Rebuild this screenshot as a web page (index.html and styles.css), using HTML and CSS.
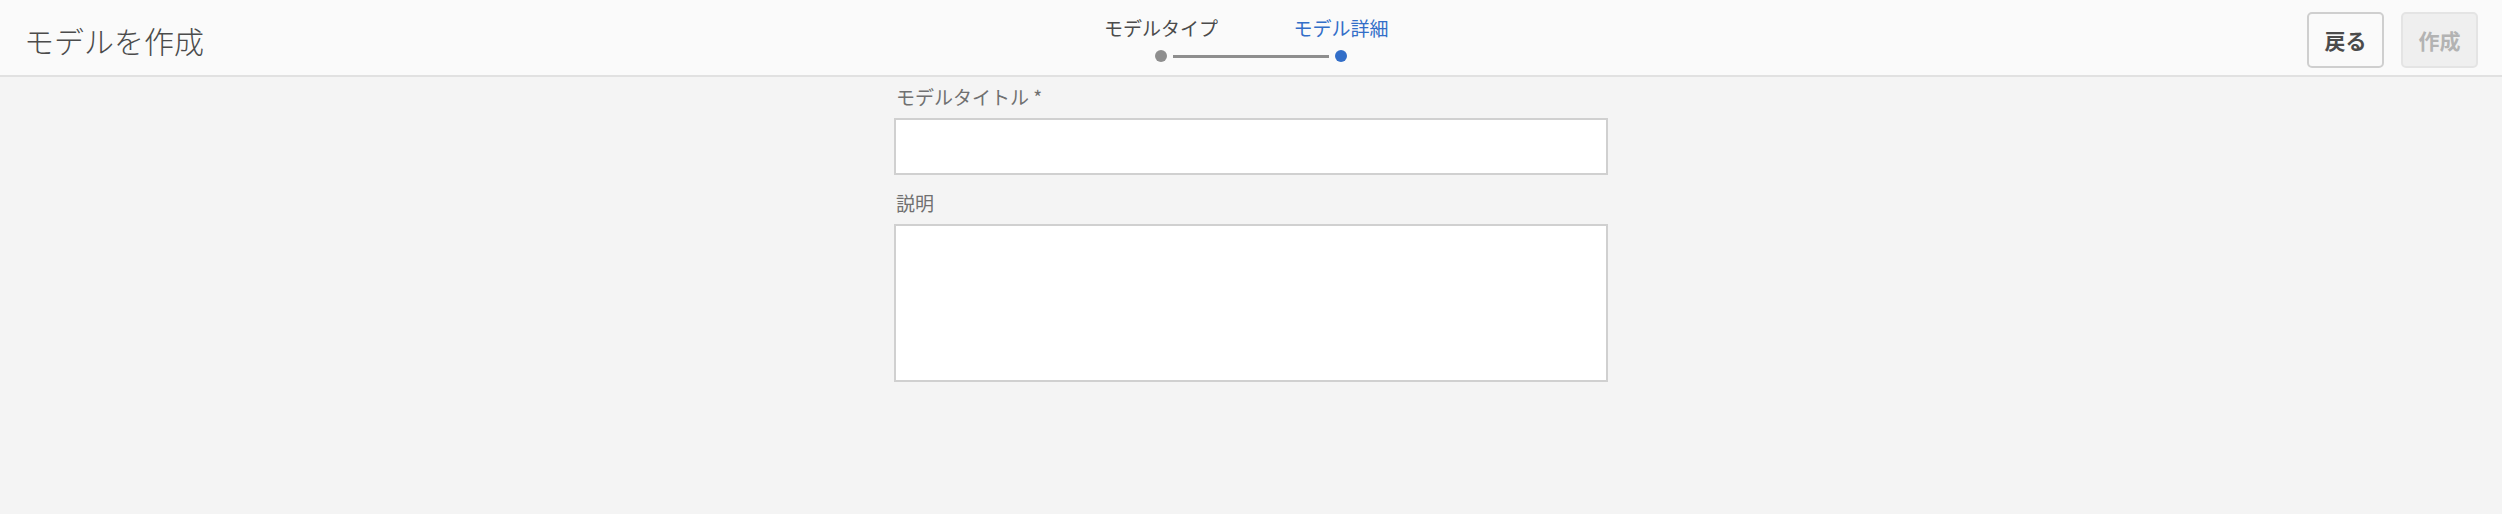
FILE: index.html
```html
<!DOCTYPE html>
<html lang="ja">
<head>
<meta charset="utf-8">
<title>モデルを作成</title>
<link rel="stylesheet" href="styles.css">
</head>
<body>
<header class="topbar">
  <h1 class="title">モデルを作成</h1>
  <div class="steps">
    <div class="step-labels">
      <span class="step-label done">モデルタイプ</span>
      <span class="step-label current">モデル詳細</span>
    </div>
    <div class="step-track">
      <span class="dot dot-done"></span>
      <span class="track-line"></span>
      <span class="dot dot-current"></span>
    </div>
  </div>
  <div class="actions">
    <button class="btn">戻る</button>
    <button class="btn btn-disabled" disabled>作成</button>
  </div>
</header>
<main class="content">
  <form class="form">
    <div class="field">
      <label class="label">モデルタイトル *</label>
      <input class="input" type="text">
    </div>
    <div class="field">
      <label class="label">説明</label>
      <textarea class="textarea"></textarea>
    </div>
  </form>
</main>
</body>
</html>
```
FILE: styles.css
```css
html, body {
  margin: 0;
  padding: 0;
  background: #f4f4f4;
  font-family: "Noto Sans CJK JP", "Noto Sans", sans-serif;
}

.topbar {
  display: grid;
  grid-template-columns: 1fr auto 1fr;
  height: 75px;
  background: #fafafa;
  border-bottom: 2px solid #e1e1e1;
}

.title {
  margin: 0;
  padding-left: 24px;
  align-self: center;
  margin-top: 4px;
  font-size: 30px;
  font-weight: 200;
  color: #4b4b4b;
  line-height: 1;
}

.steps {
  padding-top: 16px;
  display: flex;
  flex-direction: column;
  align-items: center;
}

.step-labels {
  display: flex;
}

.step-label {
  width: 180px;
  text-align: center;
  font-size: 19px;
  line-height: 24px;
}

.step-label.done { color: #4b4b4b; }
.step-label.current { color: #326ec8; }

.step-track {
  display: flex;
  align-items: center;
  gap: 6px;
  margin-top: 10px;
}

.dot {
  width: 12px;
  height: 12px;
  border-radius: 50%;
}

.dot-done { background: #8e8e8e; }
.dot-current { background: #326ec8; }

.track-line {
  width: 156px;
  height: 3px;
  background: #8e8e8e;
}

.actions {
  display: flex;
  justify-content: flex-end;
  align-items: center;
  gap: 17px;
  padding-right: 24px;
  margin-top: 4px;
}

.btn {
  width: 77px;
  height: 56px;
  border: 2px solid #cfcfcf;
  border-radius: 5px;
  background: #fafafa;
  color: #4b4b4b;
  font-family: "Noto Sans CJK JP", "Noto Sans", sans-serif;
  font-size: 21px;
  font-weight: 700;
  padding: 0;
}

.btn-disabled {
  background: #efefef;
  border-color: #e4e4e4;
  color: #b3b3b3;
}

.content {
  display: flex;
  justify-content: center;
  padding-top: 5px;
}

.form {
  width: 714px;
  display: flex;
  flex-direction: column;
  gap: 13px;
}

.field {
  display: flex;
  flex-direction: column;
}

.label {
  font-size: 19px;
  line-height: 30px;
  color: #707070;
  margin-bottom: 6px;
  padding-left: 2px;
}

.input, .textarea {
  box-sizing: border-box;
  width: 714px;
  border: 2px solid #d0d0d0;
  background: #ffffff;
  margin: 0;
  padding: 8px;
  font-family: inherit;
  font-size: 18px;
}

.input { height: 57px; }

.textarea {
  height: 158px;
  resize: none;
  display: block;
}
```
